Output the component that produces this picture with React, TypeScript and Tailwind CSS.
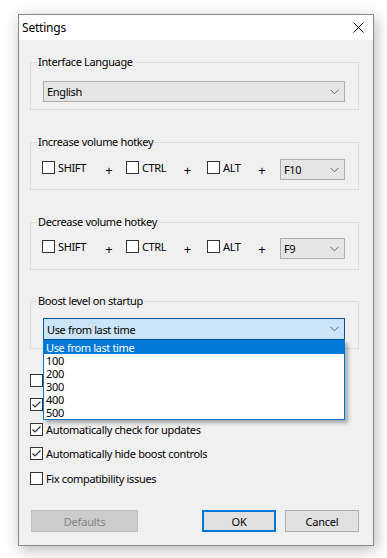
import React from "react";

const F = "font-['Noto_Sans',sans-serif]";

function Check({ checked, label, className = "" }: { checked?: boolean; label?: string; className?: string }) {
  return (
    <div className={`flex items-center ${className}`}>
      <div className="w-[13px] h-[13px] shrink-0 border border-[#333] bg-white flex items-center justify-center">
        {checked && (
          <svg width="11" height="11" viewBox="0 0 11 11">
            <path d="M1.5 5.5 L4 8 L9.5 2.5" fill="none" stroke="#333" strokeWidth="1.2" />
          </svg>
        )}
      </div>
      {label && (
        <span className="ml-[3px] text-[11px] leading-[13px] tracking-[-0.35px] text-black whitespace-nowrap">{label}</span>
      )}
    </div>
  );
}

function Chevron() {
  return (
    <svg width="9" height="6" viewBox="0 0 9 6" className="shrink-0">
      <path d="M0.5 0.8 L4.5 4.8 L8.5 0.8" fill="none" stroke="#606060" strokeWidth="1" />
    </svg>
  );
}

function Combo({ value, className = "" }: { value: string; className?: string }) {
  return (
    <div
      className={`h-[21px] border border-[#adadad] bg-[#e5e5e5] flex items-center justify-between pl-[3px] pr-[5px] ${className}`}
    >
      <span className="text-[11px] leading-[13px] tracking-[-0.35px] text-black">{value}</span>
      <Chevron />
    </div>
  );
}

function Group({ title, children, className = "" }: { title: string; children: React.ReactNode; className?: string }) {
  return (
    <div className={`relative h-[48px] border border-[#dcdcdc] ${className}`}>
      <span className="absolute left-[6px] top-[-8px] px-[1px] bg-[#f0f0f0] text-[11px] leading-[14px] tracking-[-0.35px] text-black whitespace-nowrap">
        {title}
      </span>
      {children}
    </div>
  );
}

function Plus({ className = "" }: { className?: string }) {
  return <span className={`text-center text-[13px] leading-[13px] mt-[5px] ${className}`}>+</span>;
}

function HotkeyRow({ keyName }: { keyName: string }) {
  return (
    <div className="flex items-start pl-[11px]">
      <Check label="SHIFT" className="w-[58px] mt-[2px]" />
      <Plus className="w-[18px]" />
      <Check label="CTRL" className="ml-[8px] w-[52px] mt-[2px]" />
      <Plus className="w-[19px]" />
      <Check label="ALT" className="ml-[10px] w-[46px] mt-[2px]" />
      <Plus className="w-[18px]" />
      <Combo value={keyName} className="ml-[9px] w-[65px]" />
    </div>
  );
}

function Button({ children, className = "" }: { children: React.ReactNode; className?: string }) {
  return (
    <div className={`h-[22px] flex items-center justify-center text-[11px] leading-[13px] tracking-[-0.2px] ${className}`}>
      {children}
    </div>
  );
}

export default function App() {
  const items = ["Use from last time", "100", "200", "300", "400", "500"];
  return (
    <div className={`w-[387px] min-h-[558px] bg-white pt-[14px] pl-[18px] ${F}`}>
      <div className="w-[356px] h-[532px] border border-[#888] bg-[#f0f0f0] shadow-[2px_4px_14px_rgba(0,0,0,0.28)] flex flex-col">
        <div className="h-[25px] bg-white flex items-center justify-between pl-[3px] pr-[9px] shrink-0">
          <span className="text-[12px] leading-[14px] tracking-[-0.2px] text-black">Settings</span>
          <svg width="11" height="11" viewBox="0 0 11 11">
            <path d="M0.5 0.5 L10.5 10.5 M10.5 0.5 L0.5 10.5" stroke="#000" strokeWidth="1" />
          </svg>
        </div>

        <div className="flex flex-col pl-[11px] pr-[14px] text-black">
          <Group title="Interface Language" className="mt-[22px]">
            <Combo value="English" className="ml-[12px] mt-[18px] w-[302px]" />
          </Group>

          <Group title="Increase volume hotkey" className="mt-[32px]">
            <div className="mt-[16px]">
              <HotkeyRow keyName="F10" />
            </div>
          </Group>

          <Group title="Decrease volume hotkey" className="mt-[32px]">
            <div className="mt-[15px]">
              <HotkeyRow keyName="F9" />
            </div>
          </Group>

          <Group title="Boost level on startup" className="mt-[31px] z-10">
            <div className="relative ml-[12px] mt-[16px] w-[302px]">
              <div className="h-[22px] border border-[#005499] bg-[#cce4f7] flex items-center justify-between pl-[3px] pr-[5px]">
                <span className="text-[11px] leading-[13px] tracking-[-0.35px]">Use from last time</span>
                <Chevron />
              </div>
              <div className="absolute left-0 top-full w-[302px] border border-[#0078d7] bg-white shadow-[3px_3px_4px_rgba(0,0,0,0.3)] flex flex-col">
                {items.map((it, i) => (
                  <div
                    key={it}
                    className={`h-[13px] pl-[2px] text-[11px] leading-[13px] tracking-[-0.35px] ${i === 0 ? "bg-[#0078d7] text-white" : "text-black"}`}
                  >
                    {it}
                  </div>
                ))}
              </div>
            </div>
          </Group>

          <div className="flex flex-col">
            <Check className="mt-[25px]" />
            <Check className="mt-[11px]" checked />
            <Check className="mt-[12px]" checked label="Automatically check for updates" />
            <Check className="mt-[11px]" checked label="Automatically hide boost controls" />
            <Check className="mt-[12px]" label="Fix compatibility issues" />
          </div>

          <div className="flex items-center mt-[25px] pl-[1px] pr-0">
            <Button className="w-[107px] bg-[#cccccc] border border-[#bfbfbf] text-[#838383]">Defaults</Button>
            <div className="flex-1" />
            <Button className="w-[74px] bg-[#e1e1e1] border-2 border-[#0078d7]">OK</Button>
            <Button className="ml-[9px] w-[74px] bg-[#e1e1e1] border border-[#adadad]">Cancel</Button>
          </div>
        </div>
      </div>
    </div>
  );
}
